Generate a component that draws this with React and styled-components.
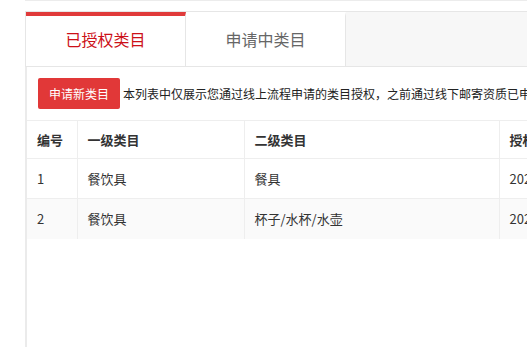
import React, { useState } from 'react';
import styled, { createGlobalStyle } from 'styled-components';

const GlobalStyle = createGlobalStyle`
    html, body {
        margin: 0;
        padding: 0;
        background: #fff;
        overflow: hidden;
    }
    body {
        font-family: "Noto Sans CJK SC", "Noto Sans", "Liberation Sans", sans-serif;
        color: #333;
    }
`;

const Page = styled.div`
    padding-left: 25px;
    width: 900px;
`;

const TopStrip = styled.div`
    height: 10px;
    border-top: 1px solid #ececec;
`;

const TabBar = styled.div`
    display: flex;
    height: 54px;
    background: #f7f7f7;
    border-top: 1px solid #e6e6e6;
    border-bottom: 1px solid #e6e6e6;
    border-left: 1px solid #e6e6e6;
`;

const Tab = styled.div`
    width: 160px;
    display: flex;
    align-items: center;
    justify-content: center;
    background: #fff;
    border-right: 1px solid #e6e6e6;
    border-top: 4px solid ${props => props.active ? '#e03a3a' : '#fff'};
    box-sizing: border-box;
    font-size: 16px;
    color: ${props => props.active ? '#cc1018' : '#666'};
    padding-bottom: 4px;
    cursor: pointer;
`;

const Panel = styled.div`
    border-left: 2px solid #ebebeb;
    min-height: 280px;
`;

const Toolbar = styled.div`
    display: flex;
    align-items: center;
    gap: 3px;
    padding: 11px;
    white-space: nowrap;
`;

const AddButton = styled.button`
    height: 31px;
    padding: 0 11px;
    border: none;
    border-radius: 2px;
    background: #e13838;
    color: #fff;
    font-family: inherit;
    font-size: 12px;
    cursor: pointer;
`;

/* 안내문은 원본처럼 오른쪽에서 잘려 보임 */
const Notice = styled.span`
    font-size: 12px;
    color: #222;
`;

const Table = styled.table`
    border-collapse: collapse;
    table-layout: fixed;
    width: 800px;
    font-size: 13px;
`;

const Th = styled.th`
    height: 37px;
    padding: 0 10px;
    text-align: left;
    font-weight: 600;
    color: #333;
    border-top: 1px solid #eee;
    border-bottom: 1px solid #eee;
    border-right: 1px solid #eee;
`;

const Tr = styled.tr`
    background: ${props => props.striped ? '#fafafa' : '#fff'};
`;

const Td = styled.td`
    height: 39px;
    padding: 0 10px;
    color: #333;
    border-bottom: 1px solid ${props => props.last ? 'transparent' : '#eee'};
    border-right: 1px solid #eee;
`;

const 목록 = [
    { id: 1, first: '餐饮具', second: '餐具', date: '2021-03-12 10:24:51' },
    { id: 2, first: '餐饮具', second: '杯子/水杯/水壶', date: '2021-03-12 10:24:51' },
];

export default function App() {
    let [탭, 탭변경] = useState(0);

    return (
        <Page>
            <GlobalStyle />
            <TopStrip />
            <TabBar>
                <Tab active={탭 === 0} onClick={() => 탭변경(0)}>已授权类目</Tab>
                <Tab active={탭 === 1} onClick={() => 탭변경(1)}>申请中类目</Tab>
            </TabBar>
            <Panel>
                <Toolbar>
                    <AddButton>申请新类目</AddButton>
                    <Notice>本列表中仅展示您通过线上流程申请的类目授权，之前通过线下邮寄资质已申请的类目授权不在此列表中展示</Notice>
                </Toolbar>
                <Table>
                    <colgroup>
                        <col style={{ width: 50 }} />
                        <col style={{ width: 167 }} />
                        <col style={{ width: 255 }} />
                        <col />
                    </colgroup>
                    <thead>
                        <tr>
                            <Th>编号</Th>
                            <Th>一级类目</Th>
                            <Th>二级类目</Th>
                            <Th>授权时间</Th>
                        </tr>
                    </thead>
                    <tbody>
                        {목록.map((row, i) => {
                            let last = i === 목록.length - 1;
                            return (
                                <Tr key={row.id} striped={i % 2 === 1}>
                                    <Td last={last}>{row.id}</Td>
                                    <Td last={last}>{row.first}</Td>
                                    <Td last={last}>{row.second}</Td>
                                    <Td last={last}>{row.date}</Td>
                                </Tr>
                            );
                        })}
                    </tbody>
                </Table>
            </Panel>
        </Page>
    );
}
